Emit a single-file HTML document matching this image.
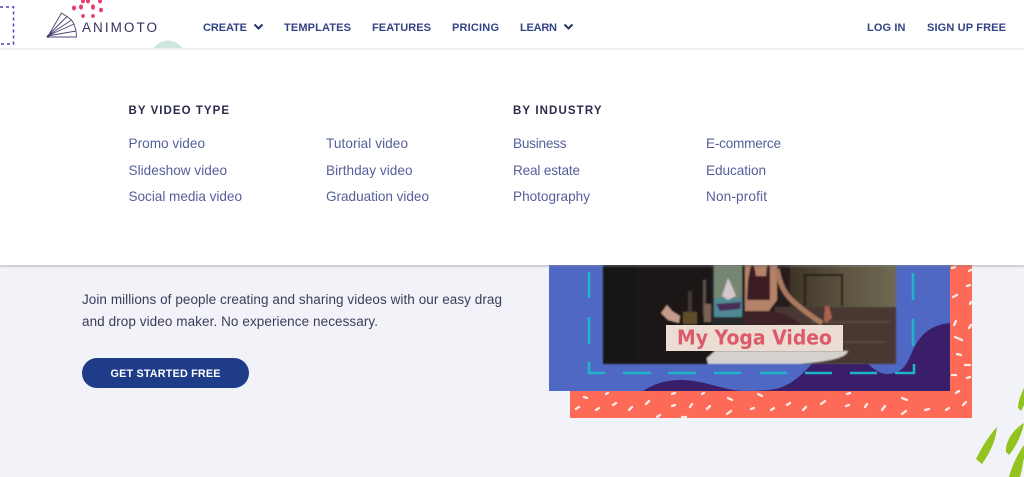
<!DOCTYPE html>
<html lang="en">
<head>
<meta charset="utf-8">
<title>Animoto</title>
<style>
html,body{margin:0;padding:0;width:1024px;height:477px;overflow:hidden;background:#f2f2f9}
svg{display:block}
text{font-family:"Liberation Sans",sans-serif}
.nav{font-size:11px;font-weight:700;fill:#334384}
.hd{font-size:11.5px;font-weight:700;fill:#2b2b4b}
.lk{font-size:13.6px;fill:#555f9b}
.p{font-size:13.5px;fill:#3c3c58}
</style>
</head>
<body>
<svg width="1024" height="477" viewBox="0 0 1024 477" xmlns="http://www.w3.org/2000/svg">
<defs>
<filter id="b" x="-5%" y="-5%" width="110%" height="110%"><feGaussianBlur stdDeviation="0.7"/></filter>
<filter id="s" x="-5%" y="-5%" width="110%" height="110%"><feGaussianBlur stdDeviation="0.35"/></filter>
<filter id="sh" x="-5%" y="-10%" width="110%" height="120%"><feGaussianBlur stdDeviation="1.2"/></filter>
<linearGradient id="bg" x1="0" x2="1" y1="0" y2="0">
<stop offset="0" stop-color="#181412"/><stop offset=".45" stop-color="#1d1715"/><stop offset=".65" stop-color="#2a1f1c"/><stop offset="1" stop-color="#3a2e26"/>
</linearGradient>
<linearGradient id="wall" x1="0" x2="1" y1="0" y2="0">
<stop offset="0" stop-color="#3e3426"/><stop offset=".5" stop-color="#5c5340"/><stop offset="1" stop-color="#6f6a52"/>
</linearGradient>
</defs>

<rect width="1024" height="477" fill="#f2f2f9"/>

<!-- Hero art -->
<rect x="570" y="260" width="402" height="158" fill="#fd6a57"/>
<path filter="url(#s)" fill="none" stroke="#fff" stroke-opacity=".85" stroke-width="2.3" stroke-linecap="round" d="M584 397l3 1M606 394l2-1M576 409l3-2M596 410l3-2M613 405l3-2M629 410l3-3M646 404l3-3M672 394l3-1M672 406l3-1M690 407l2-3M707 409l3-3M728 398l4 2M727 414l4-3M751 409l3-1M771 410l3-2M758 394l4 2M702 394l2-1M657 417l3-2M682 417l4 0M847 394l3-1M787 405l3-2M803 410l3-3M821 404l4-3M846 406l3-1M865 407l2-3M882 410l3-4M902 398l5 2M902 414l4-3M925 410l4-1M946 410l3-2M963 405l3-3M953 297l4-2M967 286l3-1M969 271l2-1M952 268l3-1M970 304l1-2M954 325l2-4M969 328l2-3M955 337l7 3M957 354l4 1M965 365l5 0M952 375l4 0M967 378l3-1M956 393l3-2"/>
<rect x="549" y="260" width="401" height="131" fill="#4f68c4"/>
<path fill="#3a1e69" d="M643 391C655 383 668 380 680 380C705 380 725 391 745 391C760 391 775 390 782 387C795 382 803 373 812 364L868 364C875 370 880 374 887 374C905 374 908 360 913 350C920 335 930 325 950 323L950 391Z"/>
<path fill="none" stroke="#1fb4c8" stroke-width="2.6" d="M589 272V298M589 317V344M589 362V373H605M623 373H651M668 373H696M714 373H741M760 373H787M805 373H832M850 373H877M895 373H914V364M913 346V319M913 300V273"/>

<!-- Photo -->
<g filter="url(#b)">
<rect x="603" y="262" width="293" height="102" fill="url(#bg)"/>
<rect x="790" y="262" width="106" height="46" fill="url(#wall)"/>
<rect x="775" y="307" width="121" height="57" fill="#493830"/>
<path stroke="#241c17" stroke-width="2" fill="none" d="M803 275H843M805 275V306M842 275V306"/>
<path stroke="#64544a" stroke-width="1" fill="none" d="M810 322H890M800 342H885"/>
<path fill="#a9795f" d="M745 262H778L777 269H745Z"/>
<path fill="#b5826a" d="M745 268H777V300L768 312H745Z"/>
<path fill="#3a1f24" d="M748 280L751 265H754L756 276H766L767 265H770L770 300H747Z"/>
<path fill="none" stroke="#a9795f" stroke-width="5" d="M777 269C780 285 785 295 795 303C805 312 814 318 822 323"/>
<path fill="#3c2126" d="M743 311H772L785 314L803 325H743Z"/>
<path fill="#a9624f" d="M824 320L825 306H829L832 318L826 323Z"/>
<path fill="#c59a8a" d="M661 313L667 305L672 311L680 316L679 323L668 320Z"/>
<rect x="688" y="291" width="4" height="24" fill="#3f3733"/>
<rect x="683" y="312" width="14" height="12" fill="#5f4d2c"/>
<rect x="703" y="280" width="3" height="36" fill="#57504c"/>
<rect x="704" y="304" width="7" height="18" fill="#7c6054"/>
<rect x="712" y="262" width="32" height="63" rx="3" fill="#262a2c"/>
<rect x="714" y="265" width="28" height="52" fill="#778672"/>
<rect x="714" y="298" width="28" height="19" fill="#4f8a94"/>
<path fill="#d4c6cc" d="M722 296L726 284L728 278L731 284L736 296L728 300Z"/>
<path fill="#4a2f5a" d="M716 304L741 302L740 309L720 311Z"/>
<path fill="#d5d1ce" d="M700 364L715 351H848C846 358 830 361 800 364Z"/>
<path fill="#1b1715" d="M664 364L678 351H705L708 364Z"/>
</g>
<rect x="666" y="325" width="177" height="26" fill="#ebdcd4"/>
<text x="677" y="344.500" style="font-family:'DejaVu Sans',sans-serif" font-size="20.500" font-weight="700" fill="#dd5a68" textLength="155" lengthAdjust="spacingAndGlyphs" filter="url(#s)">My Yoga Video</text>

<!-- Green strokes -->
<g fill="#93c31f">
<path d="M997 427C996 440 990 453 982 464L976 459C981 449 989 435 997 427Z"/>
<path d="M1024 423C1022 435 1015 448 1009 455L1006 452C1005 443 1012 430 1024 423Z"/>
<path d="M1024 445C1017 455 1012 466 1009 477H1020C1022 470 1023 463 1024 458Z"/>
<path d="M1024 388C1021 394 1018 402 1018 408L1021 411L1024 405Z"/>
</g>

<!-- Hero copy -->
<text class="p" x="82" y="304" textLength="420">Join millions of people creating and sharing videos with our easy drag</text>
<text class="p" x="82" y="326" textLength="296">and drop video maker. No experience necessary.</text>
<rect x="82" y="358" width="167" height="30" rx="15" fill="#1f3c88"/>
<text x="110.500" y="377" font-size="10.800" font-weight="700" fill="#fff" textLength="110">GET STARTED FREE</text>

<!-- Panel shadow + panel -->
<rect x="0" y="264" width="1024" height="3" fill="#8a8a96" opacity=".45" filter="url(#sh)"/>
<rect x="0" y="48" width="1024" height="217" fill="#fff"/>

<!-- Header -->
<rect x="0" y="0" width="1024" height="48" fill="#fff"/>
<circle cx="168" cy="58" r="17.500" fill="#cfe5de"/>
<rect x="0" y="48" width="1024" height="1.500" fill="#ededf1"/>
<rect x="0" y="49.500" width="1024" height="40" fill="#fff"/>

<path fill="none" stroke="#4f45c4" stroke-width="1.500" stroke-dasharray="3 3" d="M0 7H13.500V44H0"/>

<g fill="#ef3c6e">
<ellipse cx="83" cy="1" rx="2" ry="2.500"/><ellipse cx="88" cy="1" rx="2" ry="2.500"/><ellipse cx="100" cy="1" rx="2" ry="2.500"/>
<ellipse cx="74" cy="8" rx="2" ry="2.500"/><ellipse cx="81" cy="7" rx="2" ry="2.600"/><ellipse cx="93" cy="7" rx="2" ry="2.800"/><ellipse cx="101" cy="10" rx="2" ry="2.300"/>
<ellipse cx="83" cy="16" rx="1.800" ry="2"/><ellipse cx="93" cy="16" rx="1.800" ry="2"/>
</g>

<!-- Logo -->
<g fill="none" stroke="#4a4570" stroke-width=".9" stroke-linejoin="round">
<path d="M47.500 37L61.500 13L67 16.500L71.500 20L74 24L76 31L76.500 37Z"/>
<path d="M47.500 36L67 16.500M47.500 36L71.500 20M47.500 36L74 24M47.500 36L76 31"/>
</g>
<circle cx="48" cy="36.500" r="1.300" fill="#3b2e78"/>
<text x="82" y="32" font-size="13.500" fill="#35305f" textLength="75">ANIMOTO</text>

<!-- Nav -->
<text class="nav" x="203" y="31" textLength="44">CREATE</text>
<path fill="none" stroke="#26335f" stroke-width="2" d="M254.500 24.500L258.500 28.500L262.500 24.500"/>
<text class="nav" x="284" y="31" textLength="67">TEMPLATES</text>
<text class="nav" x="372" y="31" textLength="59">FEATURES</text>
<text class="nav" x="452" y="31" textLength="47">PRICING</text>
<text class="nav" x="520" y="31" textLength="37">LEARN</text>
<path fill="none" stroke="#26335f" stroke-width="2" d="M564.500 24.500L568.500 28.500L572.500 24.500"/>
<text class="nav" x="867" y="31" textLength="38.500">LOG IN</text>
<text class="nav" x="927" y="31" textLength="79">SIGN UP FREE</text>

<!-- Menu -->
<text class="hd" x="128.500" y="114" textLength="100.500">BY VIDEO TYPE</text>
<text class="hd" x="513" y="114" textLength="88.500">BY INDUSTRY</text>

<text class="lk" x="128.500" y="148" textLength="76.500">Promo video</text>
<text class="lk" x="128.500" y="175" textLength="98.500">Slideshow video</text>
<text class="lk" x="128.500" y="201" textLength="113.500">Social media video</text>
<text class="lk" x="326" y="148" textLength="82">Tutorial video</text>
<text class="lk" x="326" y="175" textLength="86.500">Birthday video</text>
<text class="lk" x="326" y="201" textLength="103">Graduation video</text>
<text class="lk" x="513" y="148" textLength="53.500">Business</text>
<text class="lk" x="513" y="175" textLength="67">Real estate</text>
<text class="lk" x="513" y="201" textLength="77">Photography</text>
<text class="lk" x="706" y="148" textLength="75">E-commerce</text>
<text class="lk" x="706" y="175" textLength="60">Education</text>
<text class="lk" x="706" y="201" textLength="61">Non-profit</text>
</svg>
</body>
</html>
